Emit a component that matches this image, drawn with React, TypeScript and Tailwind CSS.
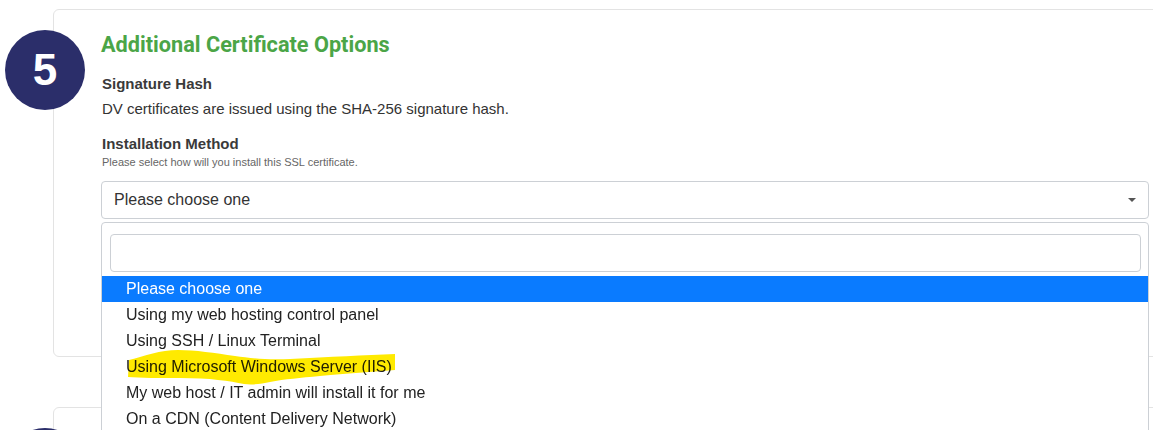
import React from "react";

const options = [
  "Please choose one",
  "Using my web hosting control panel",
  "Using SSH / Linux Terminal",
  "Using Microsoft Windows Server (IIS)",
  "My web host / IT admin will install it for me",
  "On a CDN (Content Delivery Network)",
];

export default function App() {
  return (
    <div
      className="relative w-[1153px] h-[430px] overflow-hidden bg-white"
      style={{ fontFamily: '"Liberation Sans", Arial, sans-serif' }}
    >
      <div className="w-[1200px] pt-[9px] pl-[53px]">
        {/* Card 1 */}
        <div className="relative h-[348px] border border-[#e3e3e3] rounded-[6px] bg-white">
          <div className="absolute left-[-49px] top-[20px] w-[80px] h-[80px] rounded-full bg-[#2b2e6a] flex items-center justify-center">
            <span className="text-white text-[44px] font-bold leading-none">5</span>
          </div>
          <div className="pl-[47px] pt-[21px]">
            <h2
              className="text-[21.7px] leading-[28px] font-bold text-[#4ba547]"
              style={{ fontFamily: 'Roboto, "Liberation Sans", sans-serif' }}
            >
              Additional Certificate Options
            </h2>
            <div className="mt-[15px] ml-[1px] text-[15px] leading-[20px] font-bold text-[#3a3a3a]">
              Signature Hash
            </div>
            <div className="mt-[5px] ml-[1px] text-[15px] leading-[20px] text-[#333]">
              DV certificates are issued using the SHA-256 signature hash.
            </div>
            <div className="mt-[15px] ml-[1px] text-[15px] leading-[20px] font-bold text-[#3a3a3a]">
              Installation Method
            </div>
            <div className="mt-[1px] ml-[1px] text-[11px] leading-[14px] text-[#666]">
              Please select how will you install this SSL certificate.
            </div>
            <div className="relative mt-[12px] w-[1048px]">
              <div className="h-[38px] border border-[#ccd0d5] rounded-[4px] flex items-center justify-between pl-[12px] pr-[12px]">
                <span className="text-[16px] text-[#333]">Please choose one</span>
                <span className="w-0 h-0 border-l-[4px] border-r-[4px] border-t-[4px] border-l-transparent border-r-transparent border-t-[#555]" />
              </div>
              {/* Dropdown */}
              <div className="absolute left-0 top-[41px] w-[1048px] h-[240px] z-10 bg-white border border-[#ccd0d5] rounded-t-[4px]">
                <div className="pt-[11px] pl-[8px] pr-[7px] pb-[4px]">
                  <div className="h-[38px] border border-[#ccd0d5] rounded-[4px]" />
                </div>
                <div className="relative">
                  <svg
                    className="absolute left-0 top-0 mix-blend-multiply pointer-events-none"
                    width="400"
                    height="180"
                    viewBox="0 0 400 180"
                  >
                    <g transform="translate(-102,-276)">
                      <path
                        d="M 129 360 C 145 356, 160 350, 178 350 C 195 350, 215 353, 235 356 C 250 358, 265 360, 290 359 C 330 357, 365 355, 395 354 L 395 370 C 370 372, 340 374, 320 376 C 300 378, 285 379, 270 382 C 262 384, 252 385, 244 384 C 230 381, 210 378, 180 378 C 160 378, 140 378, 128 377 Z"
                        fill="#ffea00"
                      />
                    </g>
                  </svg>
                  {options.map((o, i) => (
                    <div
                      key={o}
                      className={
                        i === 0
                          ? "h-[26px] leading-[26px] pl-[24px] text-[16px] bg-[#0a7bff] text-white"
                          : "h-[26px] leading-[26px] pl-[24px] text-[16px] text-[#222]"
                      }
                    >
                      {o}
                    </div>
                  ))}
                </div>
              </div>
            </div>
          </div>
        </div>
        {/* Card 2 */}
        <div className="relative mt-[50px] h-[200px] border border-[#e3e3e3] rounded-[6px] bg-white">
          <div className="absolute left-[-49px] top-[20px] w-[80px] h-[80px] rounded-full bg-[#2b2e6a]" />
        </div>
      </div>
    </div>
  );
}
